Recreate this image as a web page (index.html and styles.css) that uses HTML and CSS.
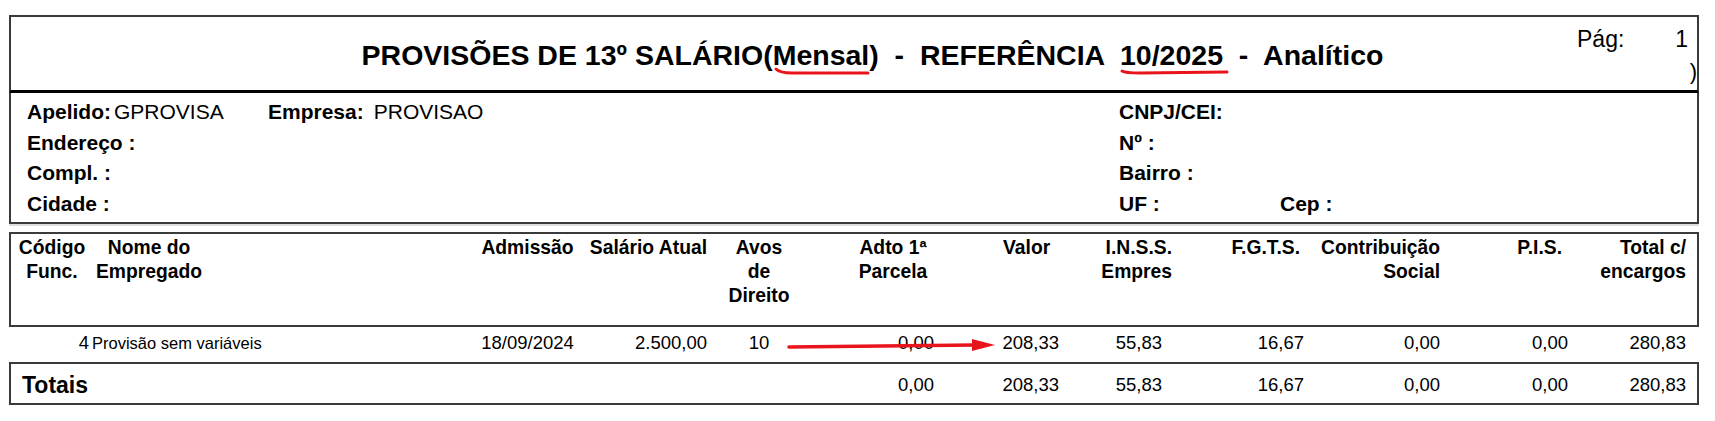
FILE: index.html
```html
<!DOCTYPE html>
<html lang="pt-BR">
<head>
<meta charset="utf-8">
<title>Provisões de 13º Salário</title>
<link rel="stylesheet" href="styles.css">
</head>
<body>
<div class="page">
  <div class="title-box">
    <h1 class="title">PROVISÕES DE 13º SALÁRIO(Mensal)  -  REFERÊNCIA  10/2025  -  Analítico</h1>
    <div class="pag"><span>Pág:</span><span>1</span></div>
    <span class="stray">)</span>
  </div>
  <div class="info-box">
    <div class="info-left">
      <div class="info-row">
        <div class="grp grp-apelido"><b>Apelido:</b><span class="val">GPROVISA</span></div>
        <div class="grp"><b>Empresa:</b><span class="val val-gap">PROVISAO</span></div>
      </div>
      <div class="info-row"><b>Endereço :</b></div>
      <div class="info-row"><b>Compl. :</b></div>
      <div class="info-row"><b>Cidade :</b></div>
    </div>
    <div class="info-right">
      <div class="info-row"><b>CNPJ/CEI:</b></div>
      <div class="info-row"><b>Nº :</b></div>
      <div class="info-row"><b>Bairro :</b></div>
      <div class="info-row"><div class="grp grp-uf"><b>UF :</b></div><b>Cep :</b></div>
    </div>
  </div>

  <div class="head-box cols">
    <div class="h c-cod">Código<br>Func.</div>
    <div class="h c-nome"><span class="nome-block">Nome do<br>Empregado</span></div>
    <div class="h c-adm">Admissão</div>
    <div class="h c-sal">Salário Atual</div>
    <div class="h c-avos">Avos<br>de<br>Direito</div>
    <div class="h c-adto">Adto 1ª<br>Parcela</div>
    <div class="h c-valor">Valor</div>
    <div class="h c-inss">I.N.S.S.<br>Empres</div>
    <div class="h c-fgts">F.G.T.S.</div>
    <div class="h c-contrib">Contribuição<br>Social</div>
    <div class="h c-pis">P.I.S.</div>
    <div class="h c-total">Total c/<br>encargos</div>
  </div>

  <div class="data-row cols">
    <div class="d c-cod">4</div>
    <div class="d c-nome"><span class="nome">Provisão sem variáveis</span></div>
    <div class="d c-adm">18/09/2024</div>
    <div class="d c-sal">2.500,00</div>
    <div class="d c-avos">10</div>
    <div class="d c-adto">0,00</div>
    <div class="d c-valor">208,33</div>
    <div class="d c-inss">55,83</div>
    <div class="d c-fgts">16,67</div>
    <div class="d c-contrib">0,00</div>
    <div class="d c-pis">0,00</div>
    <div class="d c-total">280,83</div>
  </div>

  <div class="totals-box cols">
    <div class="totais-label">Totais</div>
    <div class="d c-adto">0,00</div>
    <div class="d c-valor">208,33</div>
    <div class="d c-inss">55,83</div>
    <div class="d c-fgts">16,67</div>
    <div class="d c-contrib">0,00</div>
    <div class="d c-pis">0,00</div>
    <div class="d c-total">280,83</div>
  </div>

  <svg class="marks" width="1715" height="421" viewBox="0 0 1715 421">
    <path d="M776 69 Q780 73 792 73 L868 73" fill="none" stroke="#e8141b" stroke-width="3" stroke-linecap="round"/>
    <path d="M1122 71 Q1125 73 1140 73 L1227 72" fill="none" stroke="#e8141b" stroke-width="3" stroke-linecap="round"/>
    <path d="M789 347 L975 345" fill="none" stroke="#e8141b" stroke-width="3.5" stroke-linecap="round"/>
    <path d="M972 339 L995 345 L972 351 Z" fill="#e8141b"/>
  </svg>
</div>
</body>
</html>
```

FILE: styles.css
```css
html, body {
  margin: 0;
  padding: 0;
  background: #fff;
}

body {
  font-family: "Liberation Sans", Arial, sans-serif;
  color: #000;
}

.page {
  position: relative;
  width: 1715px;
  height: 421px;
  padding: 15px 0 0 9px;
  box-sizing: border-box;
}

.title-box {
  position: relative;
  overflow: hidden;
  width: 1690px;
  height: 78px;
  box-sizing: border-box;
  border: 2px solid #3a3a3a;
  border-bottom: 3px solid #000;
  display: flex;
  align-items: flex-start;
}

.title {
  flex: 1;
  margin: 0;
  padding: 21px 0 0 157px;
  text-align: center;
  font-size: 28.5px;
  font-weight: bold;
  white-space: pre;
  line-height: 34px;
}

.pag {
  width: 111px;
  padding: 9px 9px 0 0;
  display: flex;
  justify-content: space-between;
  font-size: 23px;
  line-height: 26px;
}

.stray {
  position: absolute;
  right: 0;
  top: 44px;
  font-size: 22px;
  line-height: 22px;
}

.info-box {
  width: 1690px;
  height: 131px;
  box-sizing: border-box;
  border: 2px solid #3a3a3a;
  border-top: none;
  padding: 4px 0 0 16px;
  display: grid;
  grid-template-columns: 1092px 1fr;
  font-size: 21px;
  box-shadow: 0 2px 0 #dedede;
}

.info-row {
  display: flex;
  height: 30.5px;
  align-items: center;
  white-space: nowrap;
}

.info-row b {
  font-weight: bold;
}

.grp {
  display: flex;
}

.grp-apelido {
  width: 241px;
}

.grp-uf {
  width: 161px;
}

.val {
  padding-left: 3px;
}

.val-gap {
  padding-left: 10px;
}

.cols {
  display: grid;
  grid-template-columns: 79px 380px 115px 127px 94px 134px 125px 115px 130px 136px 128px 123px;
}

.head-box {
  margin-top: 8px;
  width: 1690px;
  height: 95px;
  box-sizing: border-box;
  border: 2px solid #3a3a3a;
  padding-top: 2px;
  font-size: 19.3px;
  font-weight: bold;
  line-height: 24px;
}

.h {
  white-space: nowrap;
}

.c-cod.h { text-align: center; padding-left: 3px; }
.c-nome.h { text-align: left; }
.nome-block { display: inline-block; text-align: center; margin-left: 6px; }
.c-adm { text-align: center; }
.c-sal { text-align: right; padding-right: 5px; }
.c-avos { text-align: center; }
.c-adto.h { text-align: center; padding-left: 40px; }
.c-valor.h { text-align: left; padding-left: 63px; }
.c-inss.h { text-align: right; padding-right: 8px; }
.c-fgts.h { text-align: right; padding-right: 10px; }
.c-contrib.h { text-align: right; padding-right: 6px; }
.c-pis.h { text-align: right; padding-right: 12px; }
.c-total.h { text-align: right; padding-right: 11px; }

.data-row {
  width: 1690px;
  height: 35px;
  box-sizing: border-box;
  padding: 0 2px 4px;
  align-items: center;
  font-size: 18.5px;
}

.d {
  white-space: nowrap;
}

.c-cod.d { text-align: right; padding-right: 1px; }
.c-nome.d { text-align: left; padding-left: 2px; }
.nome { font-size: 16.5px; }
.c-adto.d { text-align: right; padding-right: 6px; }
.c-valor.d { text-align: right; padding-right: 6px; }
.c-inss.d { text-align: right; padding-right: 18px; }
.c-fgts.d { text-align: right; padding-right: 6px; }
.c-contrib.d { text-align: right; padding-right: 6px; }
.c-pis.d { text-align: right; padding-right: 6px; }
.c-total.d { text-align: right; padding-right: 11px; }

.totals-box {
  width: 1690px;
  height: 43px;
  box-sizing: border-box;
  border: 2px solid #3a3a3a;
  align-items: center;
  font-size: 18.5px;
  padding-top: 3px;
}

.totais-label {
  grid-column: 1 / 6;
  padding-left: 11px;
  font-size: 23px;
  font-weight: bold;
}

.marks {
  position: absolute;
  left: 0;
  top: 0;
  pointer-events: none;
}
```
